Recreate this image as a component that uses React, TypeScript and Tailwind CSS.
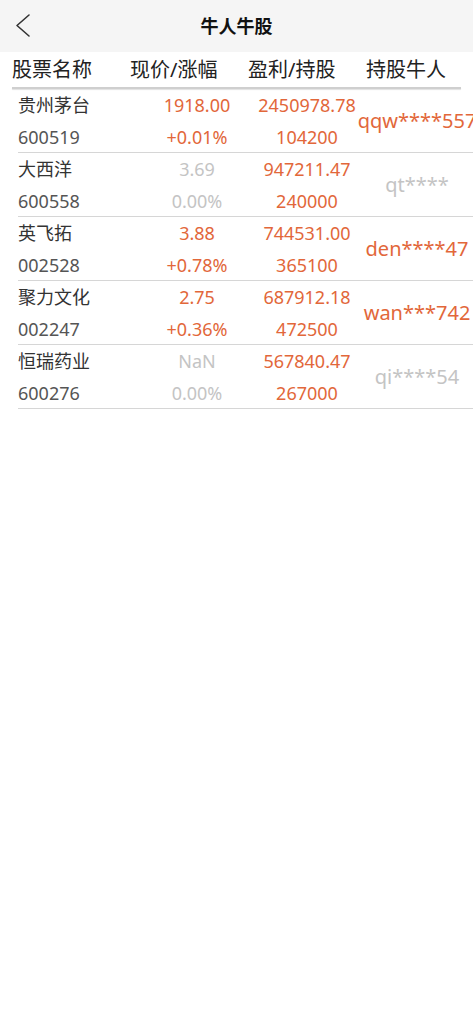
type Row = {
  name: string;
  code: string;
  price: string;
  change: string;
  profit: string;
  shares: string;
  holder: string;
  flat?: boolean;
  holderGray?: boolean;
};

const rows: Row[] = [
  { name: "贵州茅台", code: "600519", price: "1918.00", change: "+0.01%", profit: "2450978.78", shares: "104200", holder: "qqw****557" },
  { name: "大西洋", code: "600558", price: "3.69", change: "0.00%", profit: "947211.47", shares: "240000", holder: "qt****", flat: true, holderGray: true },
  { name: "英飞拓", code: "002528", price: "3.88", change: "+0.78%", profit: "744531.00", shares: "365100", holder: "den****47" },
  { name: "聚力文化", code: "002247", price: "2.75", change: "+0.36%", profit: "687912.18", shares: "472500", holder: "wan***742" },
  { name: "恒瑞药业", code: "600276", price: "NaN", change: "0.00%", profit: "567840.47", shares: "267000", holder: "qi****54", flat: true, holderGray: true },
];

export default function App() {
  return (
    <div
      className="min-h-[1024px] w-full bg-white overflow-hidden"
      style={{ fontFamily: '"Noto Sans", "Noto Sans CJK SC", sans-serif' }}
    >
      {/* 顶部导航 */}
      <div className="relative h-[52px] bg-[#f5f5f5] flex items-center justify-center">
        <svg className="absolute left-[12px] top-[12px] w-[24px] h-[28px]" viewBox="0 0 24 28" fill="none">
          <polyline points="17,3 5,13.5 17,24" stroke="#333" strokeWidth="1.6" strokeLinecap="round" strokeLinejoin="round" />
        </svg>
        <span className="text-[18px] font-bold text-[#111]">牛人牛股</span>
      </div>

      {/* 表头 */}
      <div className="flex pl-[12px] h-[35px] items-center text-[20px] text-[#222] leading-none">
        <span className="w-[118px]">股票名称</span>
        <span className="w-[118px]">现价/涨幅</span>
        <span className="w-[118px]">盈利/持股</span>
        <span className="flex-1">持股牛人</span>
      </div>
      <div className="ml-[12px] w-[449px] h-[2px] bg-[#cfcfcf] shadow-[0_1px_1px_rgba(0,0,0,0.12)]" />

      {/* 列表 */}
      <div className="ml-[18px]">
        {rows.map((r) => (
          <div key={r.code} className="flex h-[64px] border-b border-[#d6d6d6] text-[18px] leading-[32px]">
            <div className="w-[124px] shrink-0 text-[#333]">
              <div>{r.name}</div>
              <div className="text-[#555]">{r.code}</div>
            </div>
            <div className={`w-[110px] shrink-0 text-center ${r.flat ? "text-[#c4c4c4]" : "text-[#e2673a]"}`}>
              <div>{r.price}</div>
              <div>{r.change}</div>
            </div>
            <div className="w-[110px] shrink-0 text-center text-[#e2673a]">
              <div>{r.profit}</div>
              <div>{r.shares}</div>
            </div>
            <div
              className={`w-[110px] shrink-0 flex items-center justify-center whitespace-nowrap text-[20px] ${
                r.holderGray ? "text-[#c4c4c4]" : "text-[#e2673a]"
              }`}
            >
              {r.holder}
            </div>
          </div>
        ))}
      </div>
    </div>
  );
}
